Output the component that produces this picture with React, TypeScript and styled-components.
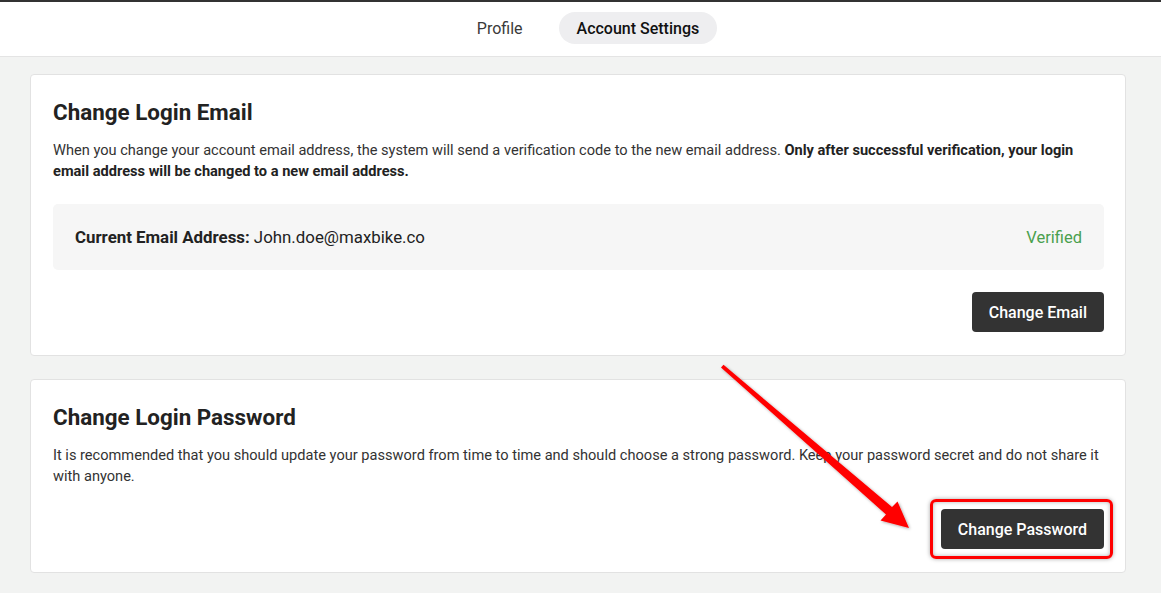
import * as React from 'react'
import styled, { createGlobalStyle } from 'styled-components'

const GlobalStyle = createGlobalStyle`
  html, body {
    margin: 0;
    padding: 0;
    background: #f2f3f2;
    font-family: Roboto, "Liberation Sans", Arial, sans-serif;
    color: #222;
  }
  * { box-sizing: border-box; }
`

const App: React.FC = () => {
  return (
    <Page>
      <GlobalStyle />
      <Header>
        <Tab>Profile</Tab>
        <Tab active>Account Settings</Tab>
      </Header>
      <Content>
        <Card>
          <CardTitle>Change Login Email</CardTitle>
          <CardText>
            When you change your account email address, the system will send a verification code to the new email
            address. <strong>Only after successful verification, your login email address will be changed to a new email address.</strong>
          </CardText>
          <EmailBox>
            <EmailLabel>
              <strong>Current Email Address:</strong> John.doe@maxbike.co
            </EmailLabel>
            <Verified>Verified</Verified>
          </EmailBox>
          <Actions>
            <DarkButton>Change Email</DarkButton>
          </Actions>
        </Card>
        <Card>
          <CardTitle>Change Login Password</CardTitle>
          <CardText>
            It is recommended that you should update your password from time to time and should choose a strong
            password. Keep your password secret and do not share it with anyone.
          </CardText>
          <Actions>
            <Highlight>
              <DarkButton>Change Password</DarkButton>
            </Highlight>
          </Actions>
        </Card>
      </Content>
      <ArrowLayer width="1161" height="593" viewBox="0 0 1161 593">
        <defs>
          <filter id="arrowShadow" x="-20%" y="-20%" width="140%" height="140%">
            <feDropShadow dx="1" dy="1" stdDeviation="1.5" floodColor="#000" floodOpacity="0.35" />
          </filter>
        </defs>
        <polygon
          points="721,365.5 886,512.5 880.5,518.5 909,526 897.5,499.5 892,505 723.5,362.8"
          fill="#f00"
          filter="url(#arrowShadow)"
        />
      </ArrowLayer>
    </Page>
  )
}

const Page = styled.div`
  position: relative;
  min-height: 593px;
  border-top: 2px solid #333;
`

const Header = styled.header`
  display: flex;
  justify-content: center;
  align-items: center;
  gap: 18px;
  height: 55px;
  padding: 0 0 2px 15px;
  background: #fff;
  border-bottom: 1px solid #e4e4e4;
`

const Tab = styled.button<{ active?: boolean }>`
  height: 32px;
  padding: 0 18px;
  border: none;
  border-radius: 16px;
  font-family: inherit;
  font-size: 16px;
  font-weight: ${(p) => (p.active ? 500 : 400)};
  color: ${(p) => (p.active ? '#111' : '#3a3a3a')};
  background: ${(p) => (p.active ? '#eeeef0' : 'transparent')};
`

const Content = styled.main`
  display: flex;
  flex-direction: column;
  gap: 23px;
  padding: 17px 35px 20px 30px;
`

const Card = styled.section`
  display: flex;
  flex-direction: column;
  padding: 22px 21px 23px 22px;
  background: #fff;
  border: 1px solid #e2e2e2;
  border-radius: 4px;
`

const CardTitle = styled.h2`
  margin: 0 0 13px;
  font-size: 22.4px;
  font-weight: 700;
  line-height: 30px;
  color: #222;
`

const CardText = styled.p`
  margin: 0;
  font-size: 14.6px;
  line-height: 21px;
  color: #333;

  strong {
    font-weight: 700;
    color: #222;
  }
`

const EmailBox = styled.div`
  display: flex;
  justify-content: space-between;
  align-items: center;
  height: 66px;
  margin-top: 22px;
  padding: 0 22px;
  background: #f6f6f6;
  border-radius: 5px;
`

const EmailLabel = styled.span`
  font-size: 16.85px;
  color: #222;

  strong {
    font-weight: 700;
  }
`

const Verified = styled.span`
  font-size: 16.5px;
  color: #4aa04e;
`

const Actions = styled.div`
  display: flex;
  justify-content: flex-end;
  margin-top: 22px;
`

const DarkButton = styled.button`
  height: 40px;
  padding: 0 17px;
  border: none;
  border-radius: 4px;
  background: #333;
  color: #fff;
  font-family: inherit;
  font-size: 16px;
  font-weight: 500;
`

const Highlight = styled.div`
  position: relative;
  display: flex;

  &::after {
    content: '';
    position: absolute;
    top: -10px;
    right: -9px;
    bottom: -10px;
    left: -11px;
    border: 3px solid #f00;
    border-radius: 6px;
    box-shadow: 0 0 4px rgba(0, 0, 0, 0.35), inset 0 0 4px rgba(0, 0, 0, 0.3);
    pointer-events: none;
  }
`

const ArrowLayer = styled.svg`
  position: absolute;
  top: 0;
  left: 0;
  pointer-events: none;
`

export default App
